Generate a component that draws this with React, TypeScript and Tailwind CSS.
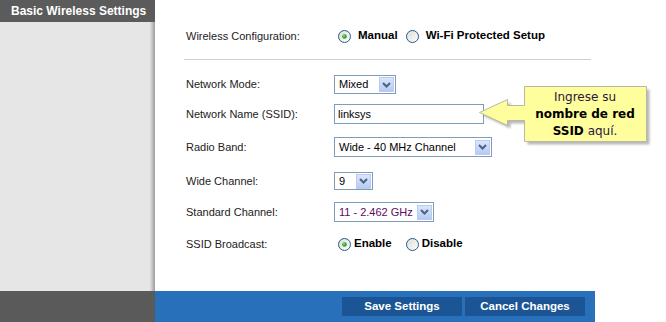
import React from "react";

function Radio({ checked }: { checked?: boolean }) {
  return (
    <svg width="13" height="13" viewBox="0 0 13 13" className="shrink-0">
      <defs>
        <linearGradient id={checked ? "rg1" : "rg0"} x1="0" y1="0" x2="1" y2="1">
          <stop offset="0" stopColor="#dcdcd6" />
          <stop offset="1" stopColor="#ffffff" />
        </linearGradient>
      </defs>
      <circle cx="6.5" cy="6.5" r="6" fill={`url(#${checked ? "rg1" : "rg0"})`} stroke="#2a5a84" strokeWidth="1" />
      {checked && (
        <>
          <circle cx="6.5" cy="6.5" r="2.3" fill="#2aa52a" />
          <circle cx="6" cy="6" r="1" fill="#7fdc7f" />
        </>
      )}
    </svg>
  );
}

function Select({
  w,
  h,
  text,
  color,
}: {
  w: string;
  h: string;
  text: string;
  color?: string;
}) {
  return (
    <div className={`${w} ${h} flex items-center border border-[#7f9db9] bg-white`}>
      <span className={`flex-1 pl-[4px] text-[11px] leading-none ${color ?? "text-black"}`}>{text}</span>
      <div className="w-[15px] h-[15px] mr-[1px] flex items-center justify-center border border-[#b9cbef] bg-gradient-to-b from-[#dbe6fc] to-[#b7caf2]">
        <svg width="9" height="6" viewBox="0 0 9 6">
          <path d="M1 1 L4.5 4.5 L8 1" fill="none" stroke="#4d6185" strokeWidth="2" />
        </svg>
      </div>
    </div>
  );
}

function Row({
  label,
  mt,
  h,
  children,
}: {
  label: string;
  mt: string;
  h: string;
  children: React.ReactNode;
}) {
  return (
    <div className={`flex items-center ${mt} ${h}`}>
      <div className="w-[148px] text-[11px] text-[#222]">{label}</div>
      {children}
    </div>
  );
}

export default function App() {
  return (
    <div className="w-[666px] h-[322px] flex flex-col bg-white font-['Liberation_Sans',Arial,sans-serif] overflow-hidden">
      <div className="flex h-[291px]">
        <aside className="w-[155px] flex flex-col">
          <div className="h-[22px] bg-[#5b5b5b] text-white font-bold text-[12px] pl-[11px] flex items-center">
            Basic Wireless Settings
          </div>
          <div className="flex-1 flex">
            <div className="flex-1 bg-[#e6e6e6]" />
            <div className="w-[5px] bg-gradient-to-r from-[#e2e2e2] to-[#9c9c9c]" />
          </div>
        </aside>
        <main className="flex-1 relative pl-[31px]">
          <Row label="Wireless Configuration:" mt="mt-[24px]" h="h-[24px]">
            <div className="flex items-center ml-[4px] text-[11.5px] font-bold text-black">
              <Radio checked />
              <span className="ml-[7px]">Manual</span>
              <span className="ml-[8px]">
                <Radio />
              </span>
              <span className="ml-[7px]">Wi-Fi Protected Setup</span>
            </div>
          </Row>
          <div className="mt-[11px] ml-[-2px] w-[407px] h-px bg-[#cfcfcf]" />
          <Row label="Network Mode:" mt="mt-[15px]" h="h-[19px]">
            <Select w="w-[62px]" h="h-[19px]" text="Mixed" />
          </Row>
          <Row label="Network Name (SSID):" mt="mt-[10px]" h="h-[20px]">
            <div className="w-[150px] h-[20px] border border-[#7f9db9] bg-white flex items-center pl-[3px] text-[11px] text-black">
              linksys
            </div>
          </Row>
          <Row label="Radio Band:" mt="mt-[13px]" h="h-[20px]">
            <Select w="w-[158px]" h="h-[20px]" text="Wide - 40 MHz Channel" />
          </Row>
          <Row label="Wide Channel:" mt="mt-[15px]" h="h-[18px]">
            <Select w="w-[39px]" h="h-[18px]" text="9" />
          </Row>
          <Row label="Standard Channel:" mt="mt-[12px]" h="h-[20px]">
            <Select w="w-[100px]" h="h-[20px]" text="11 - 2.462 GHz" color="text-[#5e0a5e]" />
          </Row>
          <Row label="SSID Broadcast:" mt="mt-[12px]" h="h-[20px]">
            <div className="flex items-center ml-[4px] text-[11.5px] font-bold text-black">
              <Radio checked />
              <span className="ml-[3px]">Enable</span>
              <span className="ml-[14px]">
                <Radio />
              </span>
              <span className="ml-[3px]">Disable</span>
            </div>
          </Row>

          {/* Callout */}
          <svg
            className="absolute left-[321px] top-[84px]"
            width="180"
            height="66"
            viewBox="0 0 180 66"
          >
            <defs>
              <filter id="blur" x="-10%" y="-10%" width="130%" height="130%">
                <feGaussianBlur stdDeviation="1.2" />
              </filter>
            </defs>
            <path
              transform="translate(3 3)"
              d="M48.5 2.5 H170.5 V57.5 H48.5 V36.5 H31.5 V41.5 L3.5 28.5 L31.5 15.5 V21.5 H48.5 Z"
              fill="rgba(0,0,0,0.28)"
              filter="url(#blur)"
            />
            <path
              d="M48.5 2.5 H170.5 V57.5 H48.5 V36.5 H31.5 V41.5 L3.5 28.5 L31.5 15.5 V21.5 H48.5 Z"
              fill="#fefe9c"
              stroke="#b8b8a4"
              strokeWidth="1"
            />
          </svg>
          <div className="absolute left-[369px] top-[86px] w-[122px] h-[55px] pt-[3px] text-center text-[12px] leading-[17px] text-[#2b1640] font-['DejaVu_Sans',Verdana,sans-serif]">
            <div>Ingrese su</div>
            <div className="font-bold text-black">nombre de red</div>
            <div>
              <span className="font-bold text-black">SSID</span> aquí.
            </div>
          </div>
        </main>
      </div>
      <div className="flex h-[31px]">
        <div className="w-[155px] bg-[#5a5a5a]" />
        <div className="w-[440px] bg-[#2870b9] flex items-center justify-end gap-[3px] pr-[10px]">
          <div className="w-[120px] h-[19px] bg-[#1b5595] text-white font-bold text-[11.5px] flex items-center justify-center">
            Save Settings
          </div>
          <div className="w-[120px] h-[19px] bg-[#1b5595] text-white font-bold text-[11.5px] flex items-center justify-center">
            Cancel Changes
          </div>
        </div>
        <div className="flex-1 bg-white" />
      </div>
    </div>
  );
}
